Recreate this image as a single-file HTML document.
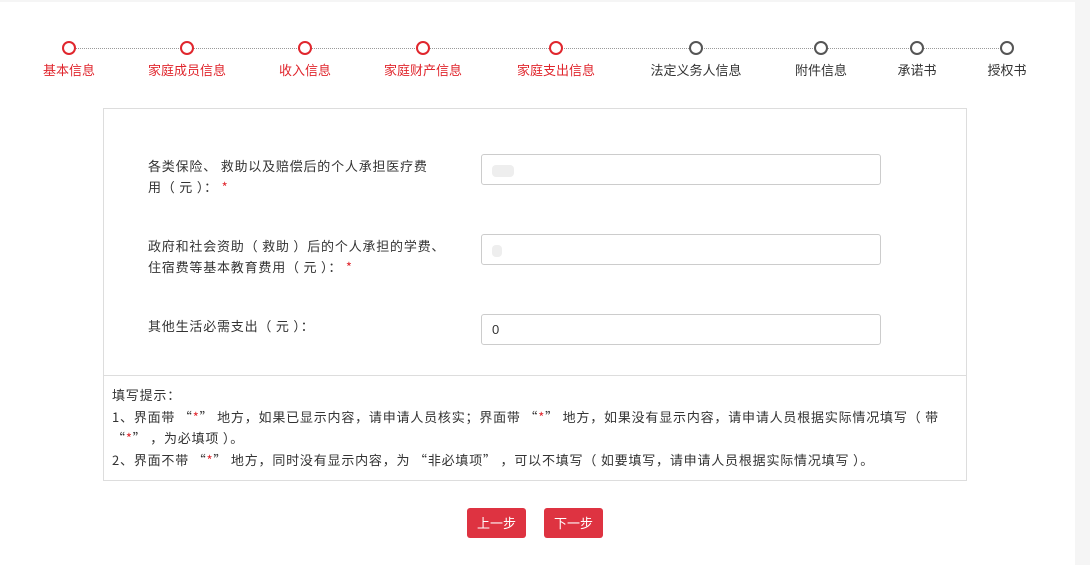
<!DOCTYPE html>
<html><head><meta charset="utf-8"><style>
*{margin:0;padding:0;box-sizing:border-box}
body{width:1090px;height:565px;background:#f5f5f5;font-family:"Noto Sans CJK SC","Liberation Sans",sans-serif;font-size:13px;color:#333;position:relative;overflow:hidden;letter-spacing:0.8px}
.page{position:absolute;left:0;top:2px;width:1075px;height:563px;background:#fff}
.line{position:absolute;top:46px;left:69px;width:938px;border-top:1px dotted #999}
.st{position:absolute;top:39px;width:14px;height:14px;border:2px solid #e0262d;border-radius:50%;background:#fff}
.st.g{border-color:#555}
.lb{position:absolute;top:58px;width:140px;text-align:center;color:#e0262d;font-size:13px;letter-spacing:0}
.lb.g{color:#333}
.box{position:absolute;left:103px;top:108px;width:864px;height:373px;border:1px solid #ddd}
.div{position:absolute;left:0;right:0;top:266px;border-top:1px solid #ddd}
.l{position:absolute;left:44px;line-height:21px;width:300px}
.in{position:absolute;left:377px;width:400px;height:31px;border:1px solid #ccc;border-radius:3px;padding-left:10px;line-height:29px;font-family:"Liberation Sans",sans-serif}
.r{color:#e0262d}
.tips{position:absolute;left:8px;top:275px;line-height:21.7px;width:848px}
.btn{position:absolute;top:508px;width:59px;height:30px;background:#de3341;color:#fff;border-radius:3px;text-align:center;line-height:30px;letter-spacing:0}
.blur{display:inline-block;width:22px;height:12px;background:#eee;vertical-align:middle;border-radius:4px}
</style></head><body>
<div class="page">
<div class="line"></div>
<div class="st" style="left:62px"></div><div class="lb" style="left:-1px">基本信息</div>
<div class="st" style="left:180px"></div><div class="lb" style="left:117px">家庭成员信息</div>
<div class="st" style="left:298px"></div><div class="lb" style="left:235px">收入信息</div>
<div class="st" style="left:416px"></div><div class="lb" style="left:353px">家庭财产信息</div>
<div class="st" style="left:549px"></div><div class="lb" style="left:486px">家庭支出信息</div>
<div class="st g" style="left:689px"></div><div class="lb g" style="left:626px">法定义务人信息</div>
<div class="st g" style="left:814px"></div><div class="lb g" style="left:751px">附件信息</div>
<div class="st g" style="left:910px"></div><div class="lb g" style="left:847px">承诺书</div>
<div class="st g" style="left:1000px"></div><div class="lb g" style="left:937px">授权书</div>
</div>
<div class="box">
<div class="l" style="top:46px">各类保险、 救助以及赔偿后的个人承担医疗费<br>用（ 元 ）： <span class="r">*</span></div>
<div class="in" style="top:45px"><span class="blur"></span></div>
<div class="l" style="top:126px">政府和社会资助（ 救助 ）后的个人承担的学费、<br>住宿费等基本教育费用（ 元 ）： <span class="r">*</span></div>
<div class="in" style="top:125px"><span class="blur" style="width:10px"></span></div>
<div class="l" style="top:206px">其他生活必需支出（ 元 ）：</div>
<div class="in" style="top:205px">0</div>
<div class="div"></div>
<div class="tips">填写提示：<br>1、界面带 “<span class="r">*</span>” 地方，如果已显示内容，请申请人员核实；界面带 “<span class="r">*</span>” 地方，如果没有显示内容，请申请人员根据实际情况填写（ 带<br> “<span class="r">*</span>” ，为必填项 ）。<br>2、界面不带 “<span class="r">*</span>” 地方，同时没有显示内容，为 “非必填项” ，可以不填写（ 如要填写，请申请人员根据实际情况填写 ）。</div>
</div>
<div class="btn" style="left:467px">上一步</div>
<div class="btn" style="left:544px">下一步</div>
</body></html>
